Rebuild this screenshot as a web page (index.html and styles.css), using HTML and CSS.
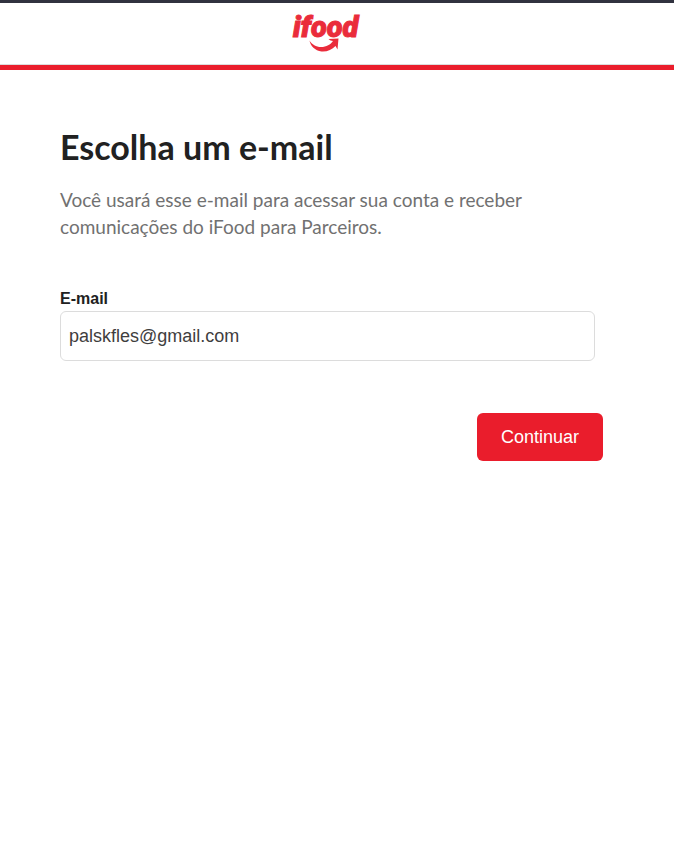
FILE: index.html
```html
<!DOCTYPE html>
<html lang="pt-BR">
<head>
  <meta charset="utf-8">
  <meta name="viewport" content="width=device-width, initial-scale=1">
  <title>iFood para Parceiros</title>
  <link rel="stylesheet" href="styles.css">
</head>
<body>
  <header class="header">
    <svg class="logo" viewBox="-2 -5 74 47" width="74" height="47" role="img" aria-label="ifood">
      <text class="logo-text" x="1" y="25">ifood</text>
      <path class="logo-smile" d="M17.500 28.500C20 32.500 24 35 29 35c5.500 0 9.500-2.500 12-6L38.500 28.500 36.500 27 46.500 26.500 45.500 37.500 43.500 34C40 37.500 35 40 29.500 39.500 23 38.500 18.500 34 17.500 28.500Z"/>
    </svg>
  </header>
  <main class="content">
    <h1 class="title">Escolha um e-mail</h1>
    <p class="lead">Você usará esse e-mail para acessar sua conta e receber comunicações do iFood para Parceiros.</p>
    <form class="form">
      <div class="field">
        <label class="label" for="email">E-mail</label>
        <input class="input" id="email" name="email" type="email" value="palskfles@gmail.com">
      </div>
      <button class="button" type="submit">Continuar</button>
    </form>
  </main>
</body>
</html>
```
FILE: styles.css
```css
* {
  box-sizing: border-box;
}

body {
  margin: 0;
  background: #fff;
  color: #212121;
  font-family: "Liberation Sans", Arial, sans-serif;
}

.header {
  display: flex;
  justify-content: center;
  padding: 4px 20px 11px 0;
  border-top: 3px solid #31323f;
  border-bottom: 5px solid #ea1d2c;
  box-shadow: inset 0 -1px #dcdcdc;
}

.logo {
  display: block;
}

.logo-text {
  fill: #ea2c3b;
  stroke: #ea2c3b;
  stroke-width: 1px;
  font: italic 900 29px Roboto, sans-serif;
}

.logo-smile {
  fill: #ea2c3b;
}

.content {
  padding: 55px 71px 48px 60px;
}

.title {
  margin: 0;
  font: 700 34px/44px Lato, sans-serif;
}

.lead {
  margin: 17px 0 0;
  color: #717171;
  font: 400 19px/27px Lato, sans-serif;
}

.form {
  display: flex;
  flex-direction: column;
  margin-top: 49px;
}

.field {
  display: flex;
  flex-direction: column;
  gap: 2px;
  margin-right: 8px;
}

.label {
  font-size: 16px;
  font-weight: 700;
  line-height: 20px;
}

.input {
  width: 100%;
  height: 50px;
  padding: 0 8px;
  border: 1px solid #dcdcdc;
  border-radius: 6px;
  background: #fff;
  color: #3f3e3e;
  font: 18px "Liberation Sans", Arial, sans-serif;
}

.button {
  align-self: flex-end;
  height: 48px;
  margin-top: 52px;
  padding: 0 24px;
  border: 0;
  border-radius: 6px;
  background: #ea1d2c;
  color: #fff;
  font: 18px "Liberation Sans", Arial, sans-serif;
}
```
